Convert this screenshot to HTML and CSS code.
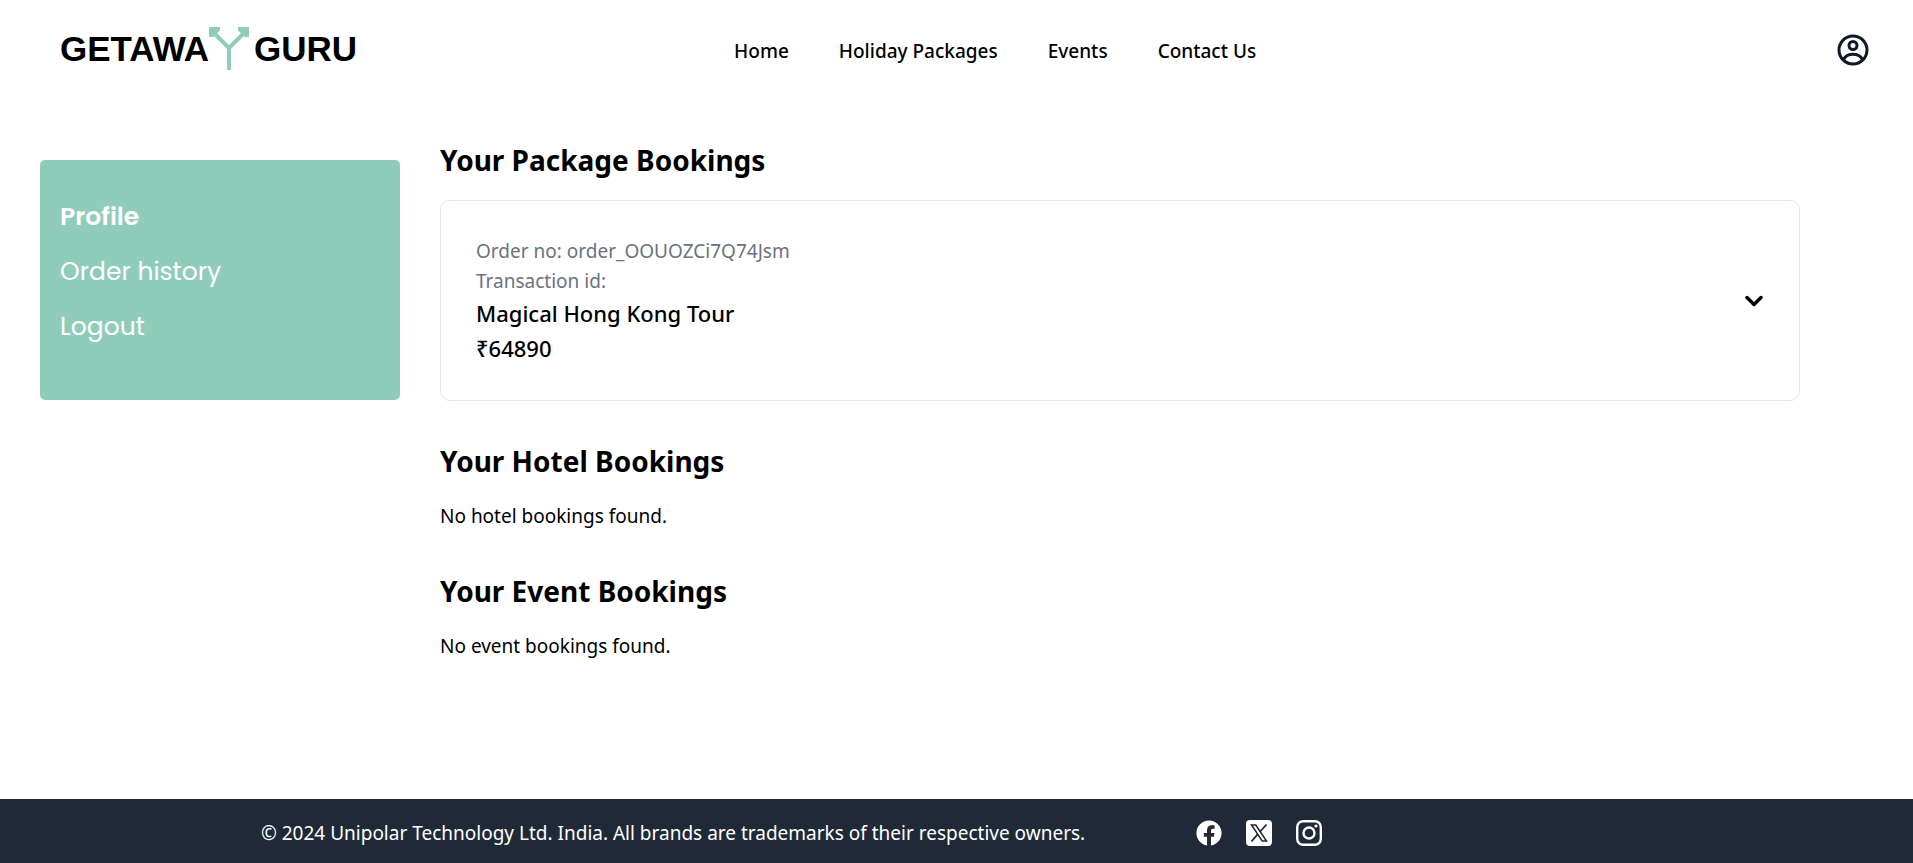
FILE: index.html
```html
<!DOCTYPE html>
<html lang="en">
<head>
<meta charset="utf-8">
<meta name="viewport" content="width=device-width, initial-scale=1">
<title>Getaway Guru</title>
<link rel="stylesheet" href="styles.css">
</head>
<body class="page">
<header class="header">
  <a class="logo" href="#" aria-label="Getaway Guru">
    <span>GETAWA</span>
    <svg class="logo-mark" viewBox="0 0 40 43" width="40" height="43" aria-hidden="true">
      <path d="M20 43V21L5 6M20 21L35 6" fill="none" stroke="#8fcdba" stroke-width="4"/>
      <path d="M0 0h11v3.500L4 10H0zM40 0H29v3.500L36 10h4z" fill="#8fcdba"/>
    </svg>
    <span>GURU</span>
  </a>
  <nav class="nav">
    <a href="#">Home</a>
    <a href="#">Holiday Packages</a>
    <a href="#">Events</a>
    <a href="#">Contact Us</a>
  </nav>
  <button class="account" type="button" aria-label="Account">
    <svg viewBox="0 0 32 32" width="32" height="32" fill="none" stroke="#111827" stroke-width="3">
      <circle cx="16" cy="16" r="14"/>
      <circle cx="16" cy="11.500" r="4"/>
      <path d="M6.500 25.500C8.500 22 12 20.300 16 20.300S23.500 22 25.500 25.500"/>
    </svg>
  </button>
</header>
<div class="body">
  <aside class="sidebar">
    <a class="active" href="#">Profile</a>
    <a href="#">Order history</a>
    <a href="#">Logout</a>
  </aside>
  <main class="main">
    <section>
      <h2>Your Package Bookings</h2>
      <article class="card">
        <div>
          <p class="meta">Order no: order_OOUOZCi7Q74Jsm</p>
          <p class="meta">Transaction id:</p>
          <h3>Magical Hong Kong Tour</h3>
          <p class="price">₹64890</p>
        </div>
        <button class="toggle" type="button" aria-label="Show details">
          <svg viewBox="0 0 20 20" width="20" height="20" fill="none" stroke="#000" stroke-width="3.500" stroke-linecap="round" stroke-linejoin="round"><path d="M3 6.500l7 7 7-7"/></svg>
        </button>
      </article>
    </section>
    <section>
      <h2>Your Hotel Bookings</h2>
      <p>No hotel bookings found.</p>
    </section>
    <section>
      <h2>Your Event Bookings</h2>
      <p>No event bookings found.</p>
    </section>
  </main>
</div>
<footer class="footer">
  <p>© 2024 Unipolar Technology Ltd. India. All brands are trademarks of their respective owners.</p>
  <div class="social">
    <a href="#" aria-label="Facebook">
      <svg viewBox="0 0 512 512" width="26" height="26" fill="#fff"><path d="M504 256C504 119 393 8 256 8S8 119 8 256c0 123.780 90.690 226.380 209.250 245V327.690h-63V256h63v-54.640c0-62.150 37-96.480 93.670-96.480 27.140 0 55.520 4.840 55.520 4.840v61h-31.280c-30.800 0-40.410 19.120-40.410 38.730V256h68.780l-11 71.690h-57.780V501C413.310 482.380 504 379.780 504 256z"/></svg>
    </a>
    <a href="#" aria-label="X">
      <svg viewBox="0 0 26 26" width="26" height="26"><rect width="26" height="26" rx="4" fill="#fff"/><path d="M5.500 5h4.300l10.700 16h-4.300z" fill="none" stroke="#1f2937" stroke-width="1.500"/><path d="M20.500 4.500l-6.800 7.500M11.800 14.200L5.500 21.500" stroke="#1f2937" stroke-width="1.800"/></svg>
    </a>
    <a href="#" aria-label="Instagram">
      <svg viewBox="0 0 26 26" width="26" height="26" fill="none" stroke="#fff" stroke-width="2.400"><rect x="1.200" y="1.200" width="23.600" height="23.600" rx="6"/><circle cx="13" cy="13" r="5.500"/><circle cx="20" cy="6" r="1.600" fill="#fff" stroke="none"/></svg>
    </a>
  </div>
</footer>
</body>
</html>
```
FILE: styles.css
```css
* { box-sizing: border-box; }
.page {
  margin: 0;
  min-height: 100vh;
  display: flex;
  flex-direction: column;
  background: #fff;
  color: #000;
  font: 400 19px/30px "Segoe UI", "Noto Sans", sans-serif;
}
h2, h3, p { margin: 0; }
a { color: inherit; text-decoration: none; }
button { padding: 0; border: 0; background: none; cursor: pointer; }
svg { display: block; }

.header {
  display: grid;
  grid-template-columns: 11fr auto 10fr;
  align-items: center;
  height: 100px;
  padding: 0 44px 0 60px;
}
.logo {
  display: flex;
  align-items: center;
  padding-bottom: 3px;
  font: 700 35px/40px "Liberation Sans", Arial, sans-serif;
}
.logo-mark { margin-right: 5px; }
.nav { display: flex; gap: 50px; padding-top: 2px; font-weight: 500; }
.account { justify-self: end; }

.body { display: flex; align-items: flex-start; gap: 40px; padding: 40px; }
.sidebar {
  display: flex;
  flex-direction: column;
  gap: 15px;
  width: 360px;
  min-height: 240px;
  margin-top: 20px;
  padding: 37px 20px;
  border-radius: 5px;
  background: #8fcdba;
  color: #fff;
  font: 400 25px/40px Poppins, Inter, sans-serif;
}
.active { font-weight: 600; }

.main {
  display: flex;
  flex: 1;
  flex-direction: column;
  gap: 40px;
  padding-right: 73px;
}
.main h2 { margin-bottom: 20px; font-size: 28px; font-weight: 700; line-height: 40px; }
.card {
  display: flex;
  align-items: center;
  justify-content: space-between;
  padding: 35px 35px 34px;
  border: 1px solid #e5e7eb;
  border-radius: 10px;
}
.meta { color: #6b7280; }
.card h3, .price { font-size: 22px; font-weight: 500; line-height: 35px; }

.footer {
  display: flex;
  align-items: center;
  gap: 111px;
  margin-top: auto;
  min-height: 64px;
  padding: 14px 40px 10px 261px;
  background: #1f2937;
  color: #fff;
}
.social { display: flex; gap: 24px; }
```
